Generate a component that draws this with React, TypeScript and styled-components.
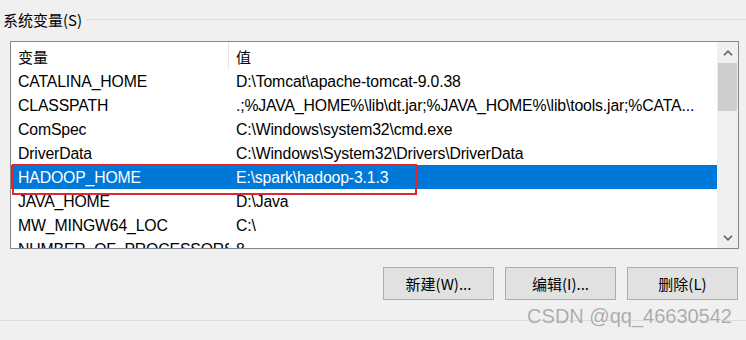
import styled, { createGlobalStyle } from "styled-components";

const GlobalStyle = createGlobalStyle`
  html, body {
    margin: 0;
    padding: 0;
    background: #f0f0f0;
  }
  body {
    font-family: "Liberation Sans", "Noto Sans CJK SC", sans-serif;
    font-size: 15.8px;
    color: #000;
  }
`;

const Page = styled.div`
  position: relative;
  width: 746px;
  height: 340px;
  overflow: hidden;
  background: #f0f0f0;
`;

const GroupHeader = styled.div`
  display: flex;
  align-items: center;
  height: 38px;
  padding-left: 3px;
`;

const GroupTitle = styled.span`
  font-family: "Noto Sans CJK SC", "Liberation Sans", sans-serif;
  font-size: 15px;
  white-space: nowrap;
`;

const GroupLine = styled.div`
  flex: 1;
  height: 1px;
  margin-left: 4px;
  background: #dcdcdc;
`;

const ListFrame = styled.div`
  position: relative;
  display: flex;
  margin: 3px 0 0 10px;
  width: 727px;
  height: 206px;
  border: 1px solid #828790;
  background: #fff;
`;

const ListBody = styled.div`
  flex: 1;
  overflow: hidden;
`;

const HeaderRow = styled.div`
  display: flex;
  height: 27px;
  align-items: center;
`;

const HeaderCell = styled.div<{ $width?: number; $divider?: boolean }>`
  width: ${(p) => (p.$width ? `${p.$width}px` : "auto")};
  flex: ${(p) => (p.$width ? "none" : 1)};
  height: 100%;
  display: flex;
  align-items: center;
  padding: 2px 0 0 7px;
  box-sizing: border-box;
  font-family: "Noto Sans CJK SC", "Liberation Sans", sans-serif;
  font-size: 15px;
  border-right: ${(p) => (p.$divider ? "1px solid #e5e5e5" : "none")};
`;

const Row = styled.div<{ $selected?: boolean }>`
  display: flex;
  height: 24px;
  box-sizing: border-box;
  padding-top: 2px;
  align-items: center;
  letter-spacing: -0.15px;
  background: ${(p) => (p.$selected ? "#0078d7" : "transparent")};
  color: ${(p) => (p.$selected ? "#fff" : "#000")};
`;

const Cell = styled.div<{ $width?: number }>`
  width: ${(p) => (p.$width ? `${p.$width}px` : "auto")};
  flex: ${(p) => (p.$width ? "none" : 1)};
  padding-left: 7px;
  box-sizing: border-box;
  white-space: nowrap;
  overflow: hidden;
`;

const ScrollBar = styled.div`
  width: 21px;
  display: flex;
  flex-direction: column;
  background: #f0f0f0;
`;

const ScrollArrow = styled.div`
  height: 21px;
  display: flex;
  align-items: center;
  justify-content: center;
`;

const ScrollThumb = styled.div`
  height: 48px;
  margin: 0 1px;
  background: #cdcdcd;
`;

const ScrollTrack = styled.div`
  flex: 1;
`;

const Highlight = styled.div`
  position: absolute;
  left: 1px;
  top: 122px;
  width: 401px;
  height: 27px;
  border: 2px solid #e0262e;
  pointer-events: none;
`;

const ButtonRow = styled.div`
  display: flex;
  justify-content: flex-end;
  gap: 11px;
  margin-top: 18px;
  padding-right: 8px;
`;

const Button = styled.button`
  width: 111px;
  height: 33px;
  border: 1px solid #adadad;
  background: #e1e1e1;
  font-family: "Noto Sans CJK SC", "Liberation Sans", sans-serif;
  font-size: 15px;
  color: #000;
  padding: 0;
`;

const BottomLine = styled.div`
  margin-top: 20px;
  height: 1px;
  background: #dcdcdc;
`;

const Watermark = styled.div`
  position: absolute;
  right: 14px;
  top: 305px;
  font-family: "Liberation Sans", sans-serif;
  font-size: 20px;
  color: #ababab;
  text-shadow: 0 0 1px #fff;
`;

const Chevron = ({ up }: { up?: boolean }) => (
  <svg width="10" height="6" viewBox="0 0 10 6">
    <path
      d={up ? "M1 5.2 L5 1.2 L9 5.2" : "M1 0.8 L5 4.8 L9 0.8"}
      fill="none"
      stroke="#606060"
      strokeWidth="1.6"
    />
  </svg>
);

const vars: [string, string][] = [
  ["CATALINA_HOME", "D:\\Tomcat\\apache-tomcat-9.0.38"],
  ["CLASSPATH", ".;%JAVA_HOME%\\lib\\dt.jar;%JAVA_HOME%\\lib\\tools.jar;%CATA..."],
  ["ComSpec", "C:\\Windows\\system32\\cmd.exe"],
  ["DriverData", "C:\\Windows\\System32\\Drivers\\DriverData"],
  ["HADOOP_HOME", "E:\\spark\\hadoop-3.1.3"],
  ["JAVA_HOME", "D:\\Java"],
  ["MW_MINGW64_LOC", "C:\\"],
  ["NUMBER_OF_PROCESSORS", "8"],
];

function App() {
  return (
    <Page>
      <GlobalStyle />
      <GroupHeader>
        <GroupTitle>系统变量(S)</GroupTitle>
        <GroupLine />
      </GroupHeader>
      <ListFrame>
        <ListBody>
          <HeaderRow>
            <HeaderCell $width={218} $divider>
              变量
            </HeaderCell>
            <HeaderCell>值</HeaderCell>
          </HeaderRow>
          {vars.map(([name, value]) => (
            <Row key={name} $selected={name === "HADOOP_HOME"}>
              <Cell $width={218}>{name}</Cell>
              <Cell>{value}</Cell>
            </Row>
          ))}
        </ListBody>
        <ScrollBar>
          <ScrollArrow>
            <Chevron up />
          </ScrollArrow>
          <ScrollThumb />
          <ScrollTrack />
          <ScrollArrow>
            <Chevron />
          </ScrollArrow>
        </ScrollBar>
        <Highlight />
      </ListFrame>
      <ButtonRow>
        <Button>新建(W)...</Button>
        <Button>编辑(I)...</Button>
        <Button>删除(L)</Button>
      </ButtonRow>
      <BottomLine />
      <Watermark>CSDN @qq_46630542</Watermark>
    </Page>
  );
}

export default App;
